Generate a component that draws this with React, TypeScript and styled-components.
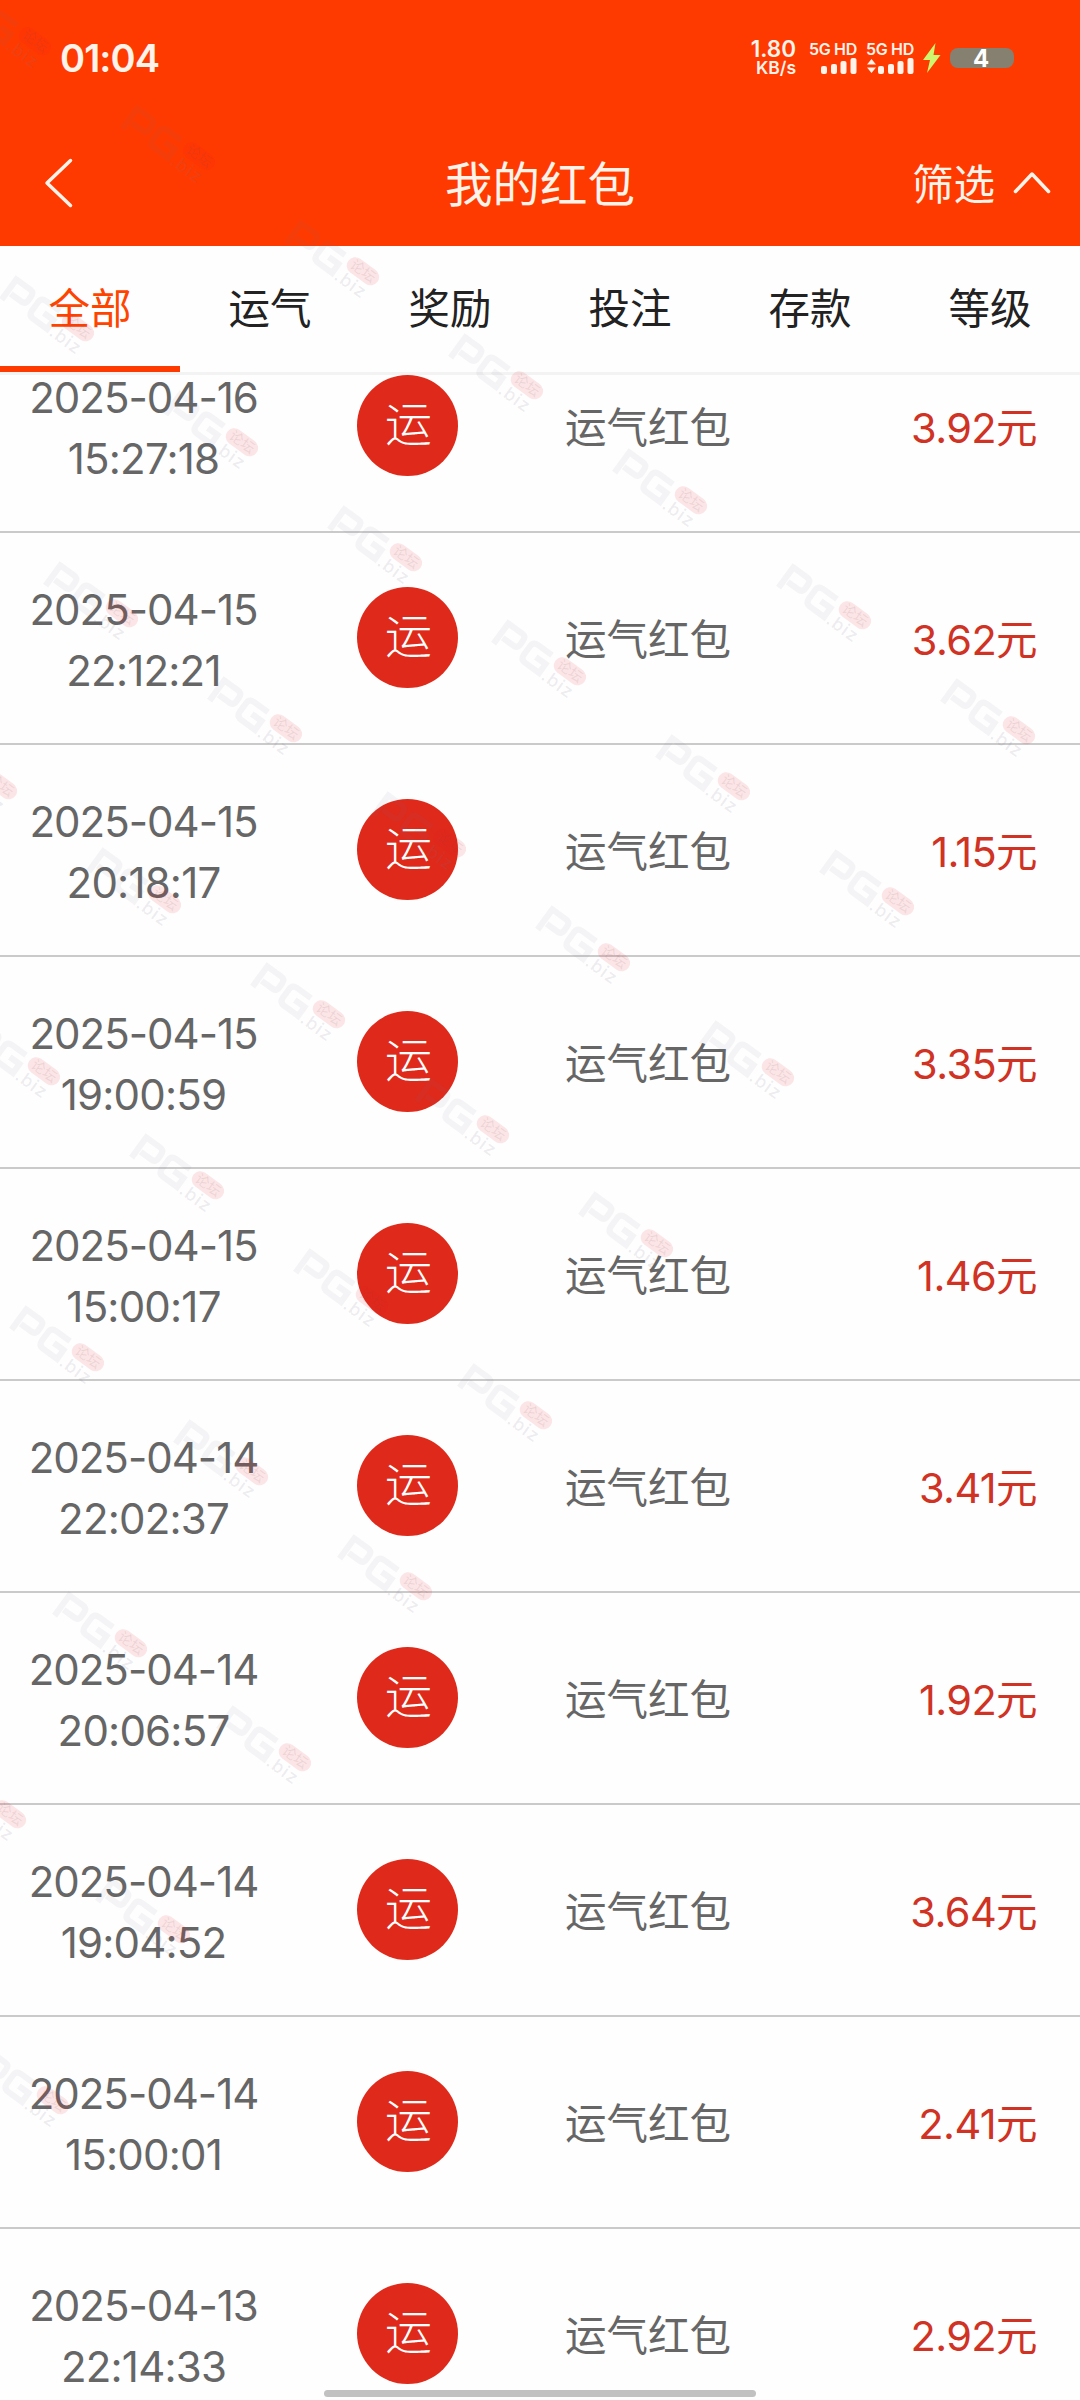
import React from "react";
import styled, { createGlobalStyle } from "styled-components";

const Global = createGlobalStyle`
  * { box-sizing: border-box; }
  body { margin: 0; background: #fefefe; }
`;

const Screen = styled.div`
  position: relative;
  display: flex;
  flex-direction: column;
  width: 1080px;
  height: 2400px;
  overflow: hidden;
  background: #fefefe;
  font-family: Inter, "Noto Sans CJK SC", sans-serif;
  font-size: 41.5px;
  color: #666;
`;

const Header = styled.header`
  height: 246px;
  flex: none;
  background: #ff3a00;
  color: #fff3ea;
`;

const StatusBar = styled.div`
  display: flex;
  align-items: center;
  height: 116px;
  padding: 0 66px 0 60px;
`;

const Clock = styled.div`
  flex: 1;
  font-size: 38px;
  font-weight: 600;
  letter-spacing: -0.9px;
`;

const Speed = styled.div`
  display: flex;
  flex-direction: column;
  align-items: flex-end;
  width: 46px;
  margin-right: 13px;
  font-weight: 600;
  font-size: 22.5px;
  line-height: 20px;
`;

const SpeedUnit = styled.span`
  font-size: 17.5px;
  line-height: 18px;
  font-weight: 600;
`;

const Signal = styled.div`
  display: flex;
  flex-direction: column;
  align-items: flex-end;
  width: 48px;
  margin-right: 9px;
  font-size: 16px;
  font-weight: 600;
  line-height: 15px;
  letter-spacing: -0.3px;
  white-space: nowrap;
`;

const Bolt = styled.svg`
  margin-right: 9px;
`;

const Battery = styled.div`
  width: 64px;
  height: 20px;
  border-radius: 8px;
  background: #858070;
  color: #fff;
  font-size: 24px;
  font-weight: 700;
  line-height: 21px;
  padding-right: 2px;
  text-align: center;
`;

const TitleBar = styled.div`
  display: grid;
  grid-template-columns: 1fr auto 1fr;
  align-items: center;
  height: 130px;
  padding: 4px 28px 0 43px;
`;

const Title = styled.h1`
  margin: 0 15px 0 0;
  padding-top: 3px;
  font-size: 47.5px;
  font-weight: 400;
  line-height: 64px;
`;

const Filter = styled.div`
  display: flex;
  align-items: center;
  justify-content: flex-end;
  gap: 17px;
  line-height: 60px;
`;

const FilterText = styled.span`
  padding-top: 3px;
`;

const Tabs = styled.nav`
  display: grid;
  grid-template-columns: repeat(6, 1fr);
  flex: none;
  height: 129px;
  border-bottom: 3px solid #f3f3f3;
  background: #fefefe;
`;

const Tab = styled.div<{ $active: boolean }>`
  height: 126px;
  border-bottom: 6px solid ${(p) => (p.$active ? "#ff3a00" : "transparent")};
  color: ${(p) => (p.$active ? "#ff4400" : "#222")};
  line-height: 120px;
  padding-top: 3px;
  text-align: center;
`;

const List = styled.main`
  flex: 1;
  min-height: 0;
  overflow: hidden;
`;

const Rows = styled.div`
  margin-top: -54px;
`;

const Row = styled.div`
  display: grid;
  grid-template-columns: 288px 239px 204px 1fr;
  align-items: center;
  height: 212px;
  padding-right: 43px;
  border-bottom: 2px solid #cacaca;
`;

const When = styled.div`
  display: flex;
  flex-direction: column;
  font-size: 42px;
  text-align: center;
  line-height: 61px;
  letter-spacing: -1px;
  padding: 4px 1px 0 0;
`;

const Time = styled.span`
  letter-spacing: -0.8px;
`;

const Badge = styled.div`
  justify-self: center;
  width: 101px;
  height: 101px;
  margin-bottom: 2px;
  border-radius: 50%;
  background: #df291a;
  color: #fff;
  font-size: 47px;
  font-weight: 300;
  line-height: 98px;
  padding-left: 2px;
  text-align: center;
`;

const Kind = styled.div`
  justify-self: end;
  line-height: 60px;
  padding-top: 4px;
`;

const Amount = styled.div`
  justify-self: end;
  color: #d03224;
  line-height: 60px;
  letter-spacing: -0.6px;
  padding-top: 4px;
`;

const HomeBar = styled.div`
  position: absolute;
  left: 324px;
  bottom: 3px;
  width: 432px;
  height: 7px;
  border-radius: 4px;
  background: #c1c1c1;
`;

const Overlay = styled.div`
  position: absolute;
  inset: 0;
  overflow: hidden;
  pointer-events: none;
`;

const Mark = styled.div`
  position: absolute;
  display: flex;
  width: 108px;
  height: 44px;
  transform-origin: 0 0;
  transform: rotate(36deg);
  color: rgba(120, 110, 130, 0.075);
`;

const MarkSide = styled.div`
  display: flex;
  flex-direction: column;
  margin: -1px 0 0 2px;
`;

const MarkPill = styled.span`
  width: 36px;
  height: 17px;
  border-radius: 9px;
  background: rgba(235, 30, 40, 0.11);
  color: rgba(120, 80, 80, 0.12);
  font-size: 14px;
  line-height: 16px;
  text-align: center;
`;

const MarkDomain = styled.span`
  color: rgba(120, 110, 130, 0.13);
  font-size: 18px;
  font-weight: 500;
  line-height: 18px;
  letter-spacing: 1px;
  margin-left: -2px;
`;

const tabs = ["全部", "运气", "奖励", "投注", "存款", "等级"];

const records = [
  ["2025-04-16", "15:27:18", "3.92"],
  ["2025-04-15", "22:12:21", "3.62"],
  ["2025-04-15", "20:18:17", "1.15"],
  ["2025-04-15", "19:00:59", "3.35"],
  ["2025-04-15", "15:00:17", "1.46"],
  ["2025-04-14", "22:02:37", "3.41"],
  ["2025-04-14", "20:06:57", "1.92"],
  ["2025-04-14", "19:04:52", "3.64"],
  ["2025-04-14", "15:00:01", "2.41"],
  ["2025-04-13", "22:14:33", "2.92"],
];

const marks: { x: number; y: number }[] = [];
for (let r = 0; r <= 8; r++) {
  for (let k = -3; k <= 5 - r; k++) {
    const x = 121 + r * 43.3 + k * 164;
    const y = 104 + r * 286 + k * 114.7;
    if (x > -100 && y > -60) marks.push({ x, y });
  }
}

const Bars = ({ arrows = false }: { arrows?: boolean }) => (
  <svg width="48" height="18" viewBox="0 0 48 18" fill="#fff3ea">
    {arrows && <path d="M1 7.5 5.5 2 10 7.5zM1 10.5h9L5.5 16z" />}
    <rect x="12" y="9" width="6" height="8" rx="2" />
    <rect x="22" y="7" width="6" height="10" rx="2" />
    <rect x="31.500" y="4" width="6" height="13" rx="2" />
    <rect x="41.500" y="1" width="6" height="16" rx="2" />
  </svg>
);

export default function App() {
  return (
    <Screen>
      <Global />
      <Header>
        <StatusBar>
          <Clock>01:04</Clock>
          <Speed>
            1.80
            <SpeedUnit>KB/s</SpeedUnit>
          </Speed>
          <Signal>
            5G HD
            <Bars />
          </Signal>
          <Signal>
            5G HD
            <Bars arrows />
          </Signal>
          <Bolt width="18" height="30" viewBox="0 0 18 30" fill="#cdf56d">
            <path d="M12.500 0 0 17h7L4 30 17.500 12h-7z" />
          </Bolt>
          <Battery>4</Battery>
        </StatusBar>
        <TitleBar>
          <svg width="30" height="50" viewBox="0 0 30 50" fill="none" stroke="#fff3ea" strokeWidth="3.500" strokeLinecap="round" strokeLinejoin="round">
            <path d="M27.500 2.500 4 25l23.500 22.500" />
          </svg>
          <Title>我的红包</Title>
          <Filter>
            <FilterText>筛选</FilterText>
            <svg width="40" height="24" viewBox="0 0 40 24" fill="none" stroke="#fff3ea" strokeWidth="3.500" strokeLinecap="round" strokeLinejoin="round">
              <path d="M3.500 20.500 20 3l16.500 17.500" />
            </svg>
          </Filter>
        </TitleBar>
      </Header>
      <Tabs>
        {tabs.map((t, i) => (
          <Tab key={t} $active={i === 0}>{t}</Tab>
        ))}
      </Tabs>
      <List>
        <Rows>
          {records.map(([date, time, sum]) => (
            <Row key={date + time}>
              <When>
                <span>{date}</span>
                <Time>{time}</Time>
              </When>
              <Badge>运</Badge>
              <Kind>运气红包</Kind>
              <Amount>{sum}元</Amount>
            </Row>
          ))}
        </Rows>
      </List>
      <Overlay>
        {marks.map((m) => (
          <Mark key={`${m.x},${m.y}`} style={{ left: m.x + 16, top: m.y - 2 }}>
            <svg width="62" height="32" viewBox="0 0 62 32" fill="none" stroke="currentColor" strokeWidth="6">
              <path d="M4 30V5h17q5 0 5 5v5q0 5-5 5H8" />
              <path d="M58 5H41q-6 0-6 6v10q0 6 6 6h17V16H46" />
            </svg>
            <MarkSide>
              <MarkPill>论坛</MarkPill>
              <MarkDomain>.biz</MarkDomain>
            </MarkSide>
          </Mark>
        ))}
      </Overlay>
      <HomeBar />
    </Screen>
  );
}
